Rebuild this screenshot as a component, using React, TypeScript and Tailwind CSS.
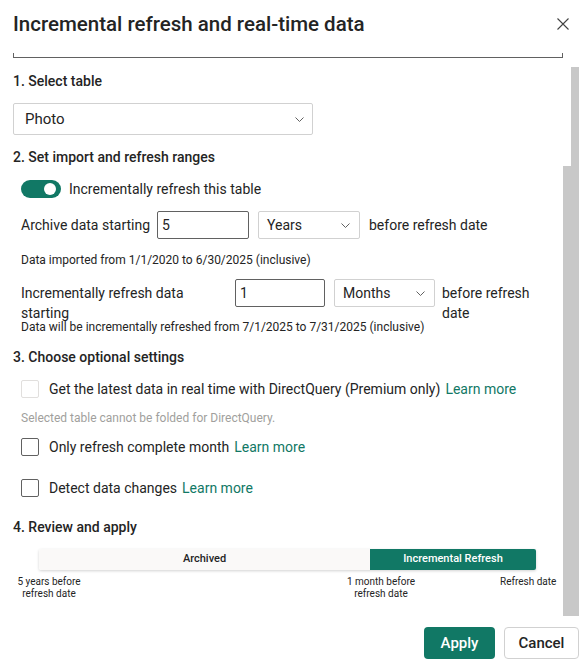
import { ReactNode } from 'react'

const TEAL = 'bg-[#117865]'

function Chevron() {
  return (
    <svg width="9" height="5" viewBox="0 0 9 5" fill="none" className="shrink-0">
      <path d="M0.5 0.5l4 4 4-4" stroke="#616161" strokeWidth="1" />
    </svg>
  )
}

function Dropdown({ value, className }: { value: string; className: string }) {
  return (
    <div className={`flex items-center justify-between border border-[#d1d1d1] rounded-[2px] bg-white ${className}`}>
      <span>{value}</span>
      <Chevron />
    </div>
  )
}

function Checkbox({ disabled }: { disabled?: boolean }) {
  return (
    <div
      className={`w-[18px] h-[18px] rounded-[2px] border shrink-0 ${
        disabled ? 'border-[#e1dfdd]' : 'border-[#616161]'
      }`}
    />
  )
}

function LearnMore() {
  return <span className="text-[#117865] ml-[5px]">Learn more</span>
}

function Heading({ children, className }: { children: ReactNode; className: string }) {
  return <div className={`h-[20px] flex items-center text-[14px] font-medium ${className}`}>{children}</div>
}

export default function App() {
  return (
    <div className="w-[585px] h-[665px] bg-white relative overflow-hidden text-[#242424] font-['Roboto',sans-serif]">
      {/* header */}
      <div className="h-[48px] flex items-center justify-between pl-[13px] pr-[16px]">
        <h1 className="text-[20.5px] font-medium">Incremental refresh and real-time data</h1>
        <svg width="12" height="12" viewBox="0 0 12 12" fill="none">
          <path d="M0.5 0.5l11 11M11.5 0.5l-11 11" stroke="#424242" strokeWidth="1.1" />
        </svg>
      </div>
      <div className="mt-[5px] mx-[13px] mr-[22px] h-[5px] border-x border-b border-[#616161]" />

      {/* scrollbar */}
      <div className="absolute left-[571px] top-[67px] w-[8px] h-[99px] bg-[#c8c8c8]" />
      <div className="absolute left-[563px] top-[166px] w-[16px] h-[450px] bg-[#c8c8c8]" />

      <div className="pl-[13px] text-[14px]">
        <Heading className="mt-[13px]">1. Select table</Heading>
        <Dropdown value="Photo" className="mt-[12px] w-[300px] h-[32px] pl-[11px] pr-[8px] text-[15px]" />

        <Heading className="mt-[12px]">2. Set import and refresh ranges</Heading>
        <div className="mt-[12px] h-[20px] pl-[8px] flex items-center">
          <div className={`w-[40px] h-[18px] rounded-full ${TEAL} flex items-center justify-end pr-[5px]`}>
            <div className="w-[12px] h-[12px] rounded-full bg-white" />
          </div>
          <span className="ml-[8px]">Incrementally refresh this table</span>
        </div>

        <div className="mt-[12px] h-[28px] pl-[8px] flex items-center">
          <span className="w-[136px] shrink-0">Archive data starting</span>
          <div className="w-[92px] h-[28px] border border-[#616161] rounded-[2px] flex items-center pl-[4px]">5</div>
          <Dropdown value="Years" className="ml-[9px] w-[102px] h-[28px] pl-[8px] pr-[9px]" />
          <span className="ml-[9px]">before refresh date</span>
        </div>

        <div className="mt-[13px] h-[16px] pl-[8px] flex items-center text-[12px]">
          Data imported from 1/1/2020 to 6/30/2025 (inclusive)
        </div>

        <div className="mt-[11px] h-[41px] pl-[8px] flex items-start">
          <span className="w-[214px] shrink-0 pt-[4px] leading-[20px] pr-[40px]">Incrementally refresh data starting</span>
          <div className="w-[90px] h-[28px] border border-[#616161] rounded-[2px] flex items-center pl-[4px] shrink-0">1</div>
          <Dropdown value="Months" className="ml-[9px] w-[101px] h-[28px] pl-[8px] pr-[9px] shrink-0" />
          <span className="ml-[7px] w-[100px] pt-[4px] leading-[20px]">before refresh date</span>
        </div>
        <div className="h-[14px] pl-[8px] flex items-center text-[12px]">
          Data will be incrementally refreshed from 7/1/2025 to 7/31/2025 (inclusive)
        </div>

        <Heading className="mt-[13px]">3. Choose optional settings</Heading>
        <div className="mt-[12px] h-[20px] pl-[8px] flex items-center">
          <Checkbox disabled />
          <span className="ml-[10px]">Get the latest data in real time with DirectQuery (Premium only)</span>
          <LearnMore />
        </div>
        <div className="mt-[11px] h-[16px] pl-[8px] flex items-center text-[12px] text-[#a19f9d]">
          Selected table cannot be folded for DirectQuery.
        </div>
        <div className="mt-[11px] h-[20px] pl-[8px] flex items-center">
          <Checkbox />
          <span className="ml-[10px]">Only refresh complete month</span>
          <LearnMore />
        </div>
        <div className="mt-[21px] h-[20px] pl-[8px] flex items-center">
          <Checkbox />
          <span className="ml-[10px]">Detect data changes</span>
          <LearnMore />
        </div>

        <Heading className="mt-[19px]">4. Review and apply</Heading>
        <div className="mt-[12px] ml-[26px] w-[497px] h-[21px] flex text-[11px] font-medium rounded-[2px] shadow-[0_1px_3px_rgba(0,0,0,0.18)]">
          <div className="w-[331px] bg-[#faf9f8] flex items-center justify-center rounded-l-[2px]">Archived</div>
          <div className={`flex-1 ${TEAL} text-white flex items-center justify-center rounded-r-[2px]`}>
            Incremental Refresh
          </div>
        </div>
        <div className="mt-[6px] flex text-[10px] leading-[12px]">
          <div className="w-[70px] ml-[1px] text-center">5 years before refresh date</div>
          <div className="w-[80px] ml-[257px] text-center">1 month before refresh date</div>
          <div className="ml-[79px]">Refresh date</div>
        </div>
      </div>

      {/* footer */}
      <div className="absolute left-0 right-0 bottom-[6px] flex justify-end gap-[9px] pr-[6px]">
        <button className={`w-[71px] h-[32px] rounded-[4px] ${TEAL} text-white text-[15px] font-medium`}>Apply</button>
        <button className="w-[75px] h-[32px] rounded-[4px] border border-[#d1d1d1] bg-white text-[15px] font-medium">
          Cancel
        </button>
      </div>
    </div>
  )
}
